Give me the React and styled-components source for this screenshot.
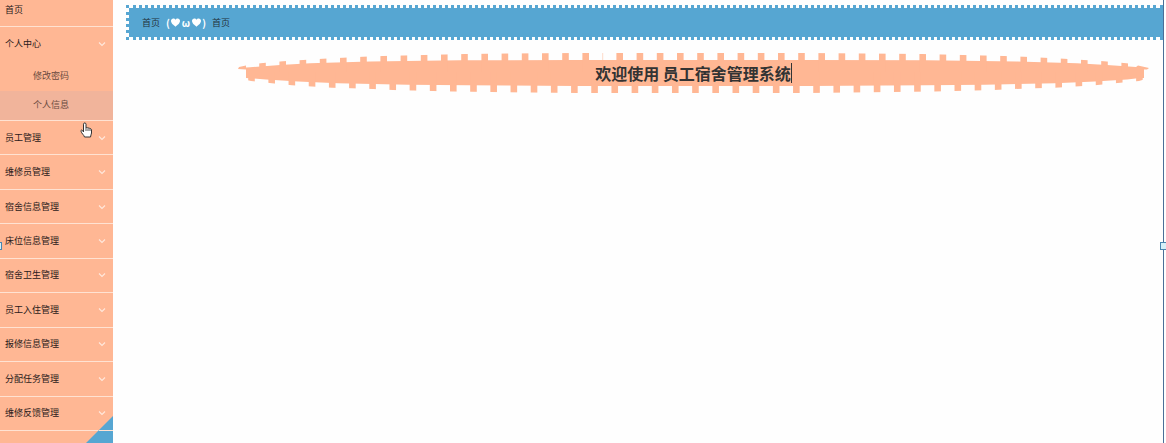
import React from "react";
import styled, { createGlobalStyle } from "styled-components";

const GlobalStyle = createGlobalStyle`
  * { box-sizing: border-box; }
  body {
    margin: 0;
    background: #fefefe;
    font-family: "Noto Sans CJK SC", "Noto Sans", sans-serif;
    color: #333;
  }
  button, a { font: inherit; color: inherit; }
`;

const Page = styled.div`
  position: relative;
  display: flex;
  height: 100vh;
  overflow: hidden;
`;

const Sidebar = styled.nav`
  flex: none;
  width: 113px;
  background: #ffb794;
  font-size: 9px;
  line-height: 12px;
`;

const HomeLink = styled.a`
  display: block;
  height: 27px;
  padding: 4px 5px 0;
  border-bottom: 1px solid #ffe2d2;
  text-decoration: none;
  color: #2a1a1a;
`;

const MenuButton = styled.button`
  display: flex;
  align-items: center;
  justify-content: space-between;
  width: 100%;
  height: ${(p) => (p.$open ? "34px" : "100%")};
  padding: 0 7px 0 5px;
  border: 0;
  border-bottom: ${(p) => (p.$open ? "0" : "1px solid #ffe2d2")};
  background: none;
  text-align: left;
  color: #2a1a1a;
`;

const SubMenu = styled.div`
  display: grid;
  grid-auto-rows: 1fr;
  height: 60px;
  border-bottom: 1px solid #ffe2d2;
`;

const SubLink = styled.a`
  display: flex;
  align-items: center;
  padding-left: 33px;
  background: ${(p) => (p.$active ? "#f1b49b" : "transparent")};
  color: #6b4a40;
  text-decoration: none;
`;

const MenuList = styled.div`
  display: grid;
  grid-auto-rows: 1fr;
  height: 310px;
`;

const Corner = styled.svg`
  position: absolute;
  left: 86px;
  bottom: 0;
  width: 27px;
  height: 27px;
`;

const Main = styled.main`
  flex: 1;
  min-width: 0;
  margin-right: 2px;
  padding: 5px 0 0 13px;
  border-right: 1px solid #4a6f98;
`;

const Breadcrumb = styled.div`
  display: flex;
  align-items: center;
  gap: 6px;
  height: 35px;
  padding-left: 13px;
  border: 3px dotted #56a6d2;
  border-right: 0;
  background: #56a6d2;
  background-clip: padding-box;
  font-size: 9px;
  color: #24333d;
`;

const Face = styled.span`
  display: flex;
  align-items: center;
  gap: 1px;
  color: #fff;
  font-size: 10px;
  font-weight: 700;
`;

const Hearts = styled.span`
  display: flex;
  align-items: center;
  gap: 2px;
`;

const Banner = styled.header`
  position: relative;
  margin: 12px 14px 0 112px;
  height: 41px;
`;

const BannerShape = styled.svg`
  position: absolute;
  inset: 0;
  width: 100%;
  height: 100%;
`;

const Title = styled.h1`
  position: relative;
  display: flex;
  align-items: center;
  justify-content: center;
  margin: 0;
  height: 41px;
  font-size: 16px;
  line-height: 20px;
  font-weight: 700;
`;

const Caret = styled.span`
  width: 1px;
  height: 20px;
  background: #333;
`;

const Handle = styled.span`
  position: absolute;
  top: 242px;
  ${(p) => p.$side}: ${(p) => (p.$side === "left" ? "-5px" : "-1px")};
  width: 7px;
  height: 8px;
  border: 1px solid #4a86b0;
  background: #d5f0f8;
`;

const Cursor = styled.svg`
  position: absolute;
  left: 79px;
  top: 121px;
  width: 15px;
  height: 18px;
`;

const Chevron = () => (
  <svg width="8" height="8" viewBox="0 0 8 8" fill="none" stroke="#ffe8dc" strokeWidth="1.1" aria-hidden="true">
    <path d="M1 2.500 4 5.500 7 2.500" />
  </svg>
);

const Heart = () => (
  <svg width="9" height="9" viewBox="0 0 9 9" fill="#fff" aria-hidden="true">
    <path d="M4.500 8.700C2.800 7.200 0 5.500 0 2.800 0 1.400 1 .4 2.300.4c1 0 1.800.5 2.200 1.300C4.900.9 5.700.4 6.700.4 8 .4 9 1.400 9 2.800 9 5.500 6.200 7.200 4.500 8.700Z" />
  </svg>
);

const items = [
  "员工管理", "维修员管理", "宿舍信息管理", "床位信息管理", "宿舍卫生管理",
  "员工入住管理", "报修信息管理", "分配任务管理", "维修反馈管理",
];

const topTeeth = [
  ...Array.from({ length: 17 }, (_, i) => 21.2 + i * 20.2),
  ...Array.from({ length: 26 }, (_, i) => 378.4 + i * 20.2),
];
const bottomTeeth = Array.from({ length: 45 }, (_, i) => 10.2 + i * 20.18);

const Ribbon = () => (
  <BannerShape viewBox="0 0 911 41" preserveAspectRatio="none" fill="#ffb794" aria-hidden="true">
    <clipPath id="rim">
      <path d="M0 14 10 12.500 25 11 45 9.300 65 8 85 6.700 105 5.700 125 4.700 145 4 186 3 227 2 340 1H570L684 2 725 3 766 4 786 4.700 806 5.700 826 6.700 846 8 866 9.300 886 11 901 12.500 911 14V26L901 29 877 31.300 857 33.200 837 34.500 817 35.700 797 36.300 776 37 756 38 736 38.500 696 39.500 570 41H340L215 39.500 175 38.500 155 38 135 37 114 36.300 94 35.700 74 34.500 54 33.200 34 31.300 13 29 0 26Z" />
    </clipPath>
    <path d="M0 17 1 15 8 13.500V15.500L12 15.200 42 13 72 11.300 132 9.500 222 8.300 340 8H570L689 8.300 779 9.500 839 11.300 869 13 898 15 900 13.500 911 16 909 17.500 906 17.500V26H902L889 27.500 857 29.500 817 31.300 747 32.700 687 33.300 570 34H340L230 33.300 170 32.700 100 31.300 60 29.500 28 27.500 8 26V17.500Z" />
    <g clipPath="url(#rim)">
      {topTeeth.map((x) => <rect key={x} x={x} y="0" width="6.600" height="20" />)}
      <rect x="364.600" y="0" width="0.500" height="9" />
      {bottomTeeth.map((x) => <rect key={x} x={x} y="20" width="6.600" height="21" />)}
    </g>
  </BannerShape>
);

export default function App() {
  return (
    <>
      <GlobalStyle />
      <Page>
        <Sidebar>
          <HomeLink href="#home">首页</HomeLink>
          <MenuButton $open>个人中心<Chevron /></MenuButton>
          <SubMenu>
            <SubLink href="#password">修改密码</SubLink>
            <SubLink href="#profile" $active>个人信息</SubLink>
          </SubMenu>
          <MenuList>
            {items.map((label) => (
              <MenuButton key={label}>{label}<Chevron /></MenuButton>
            ))}
          </MenuList>
          <Corner viewBox="0 0 27 27" aria-hidden="true">
            <path d="M27 0V27H0Z" fill="#56a6d2" />
            <path d="M13 14.500H27" stroke="#ffe2d2" />
          </Corner>
        </Sidebar>
        <Main>
          <Breadcrumb>
            <span>首页</span>
            <Face>
              <span>(</span>
              <Hearts><Heart /><span>ω</span><Heart /></Hearts>
              <span>)</span>
            </Face>
            <span>首页</span>
          </Breadcrumb>
          <Banner>
            <Ribbon />
            <Title>欢迎使用 员工宿舍管理系统<Caret /></Title>
          </Banner>
        </Main>
        <Handle $side="left" />
        <Handle $side="right" />
        <Cursor viewBox="0 0 15 18" aria-hidden="true">
          <path d="M4.500 11V3.200C4.500 1.500 7 1.500 7 3.200V7c.5-.8 1.800-.6 2 .3.6-.7 1.700-.4 1.900.5.700-.4 1.600 0 1.600 1.100V12c0 1.500-1 2.300-1 4H5.500C5 14 2.500 12.500 2 10.200c-.3-1.300 1-1.500 1.600-.6Z" fill="#fff" stroke="#333" />
          <path d="M7 7V10M9 7.500V10M11 8V10" stroke="#555" fill="none" />
        </Cursor>
      </Page>
    </>
  );
}
